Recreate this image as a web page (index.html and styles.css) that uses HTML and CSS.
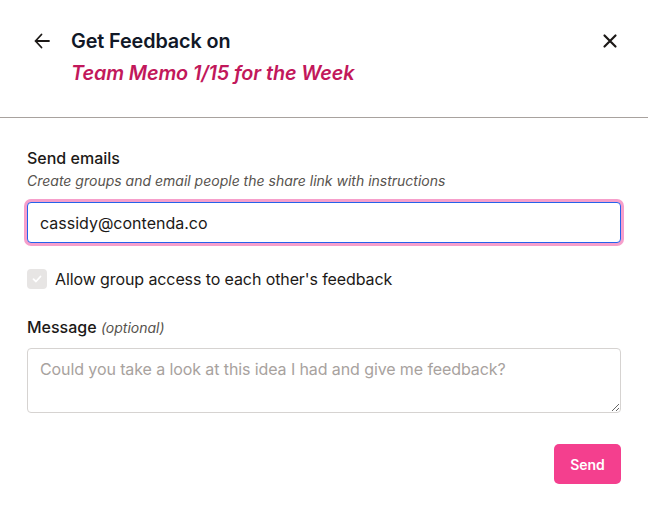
FILE: index.html
```html
<!DOCTYPE html>
<html lang="en">
<head>
<meta charset="utf-8">
<link rel="stylesheet" href="styles.css">
</head>
<body>
<div class="modal">
  <header class="head">
    <button class="icon-btn back" aria-label="Back">
      <svg width="20" height="20" viewBox="0 0 20 20" fill="none" stroke="#1c1917" stroke-width="1.8" stroke-linecap="round" stroke-linejoin="round"><path d="M17 10H3.5M9.5 3.5L3.5 10L9.5 16.5"/></svg>
    </button>
    <div class="titles">
      <div class="title">Get Feedback on</div>
      <div class="subtitle">Team Memo 1/15 for the Week</div>
    </div>
    <button class="icon-btn close" aria-label="Close">
      <svg width="16" height="16" viewBox="0 0 16 16" fill="none" stroke="#1c1917" stroke-width="2.2" stroke-linecap="round"><path d="M2.5 2.5L13.5 13.5M13.5 2.5L2.5 13.5"/></svg>
    </button>
  </header>
  <main class="body">
    <div class="field">
      <div class="label">Send emails</div>
      <div class="hint">Create groups and email people the share link with instructions</div>
      <input class="input" type="text" value="cassidy@contenda.co">
    </div>
    <label class="check-row">
      <span class="check"><svg width="12" height="12" viewBox="0 0 12 12" fill="none" stroke="#fff" stroke-width="1.8" stroke-linecap="round" stroke-linejoin="round"><path d="M2.5 6.2L5 8.5L9.5 3.5"/></svg></span>
      <span class="check-text">Allow group access to each other's feedback</span>
    </label>
    <div class="field msg">
      <div class="label">Message <span class="opt">(optional)</span></div>
      <textarea class="textarea" placeholder="Could you take a look at this idea I had and give me feedback?"></textarea>
    </div>
    <div class="actions">
      <button class="send">Send</button>
    </div>
  </main>
</div>
</body>
</html>
```

FILE: styles.css
```css
* { box-sizing: border-box; }
html, body { margin: 0; padding: 0; background: #fff; }
body { font-family: Inter, "Noto Sans", sans-serif; color: #1c1917; }
.modal { width: 648px; height: 507px; background: #fff; }
.head {
  display: flex;
  align-items: flex-start;
  height: 118px;
  padding: 29px 27px 0 31px;
  border-bottom: 1px solid #a8a29e;
}
.icon-btn {
  background: none; border: 0; padding: 0; margin: 0; cursor: pointer;
  display: flex; align-items: center; justify-content: center;
}
.back { width: 22px; height: 22px; margin-top: 1px; }
.titles { flex: 1; margin-left: 18px; }
.title { font-size: 19.8px; font-weight: 600; line-height: 24px; color: #111827; letter-spacing: -0.1px; }
.subtitle { font-size: 19.8px; font-weight: 600; font-style: italic; line-height: 24px; margin-top: 8px; color: #c2185b; letter-spacing: -0.1px; }
.close { width: 22px; height: 22px; margin-top: 1px; }
.body { padding: 30px 27px 0 27px; }
.label { font-size: 16px; font-weight: 500; line-height: 20px; color: #1c1917; }
.hint { font-size: 14px; font-style: italic; line-height: 18px; color: #57534e; margin-top: 4px; }
.input {
  display: block; width: 100%; height: 41px; margin-top: 12px;
  font-family: inherit; font-size: 16px; color: #1c1917;
  padding: 0 12px; border: 1px solid #2563eb; border-radius: 4px;
  box-shadow: 0 0 0 3px #f69fcb; outline: none; background: #fff;
}
.check-row { display: flex; align-items: center; margin-top: 26px; gap: 8px; }
.check {
  width: 20px; height: 20px; border-radius: 4px; background: #e7e5e4;
  display: flex; align-items: center; justify-content: center;
}
.check-text { font-size: 16px; line-height: 20px; color: #1c1917; letter-spacing: -0.1px; }
.msg { margin-top: 28px; }
.opt { font-size: 14px; font-style: italic; font-weight: 400; color: #57534e; }
.textarea {
  display: block; width: 100%; height: 65px; margin-top: 10px;
  font-family: inherit; font-size: 16px; line-height: 22px;
  padding: 9px 12px; border: 1px solid #d6d3d1; border-radius: 4px;
  resize: vertical; color: #1c1917; letter-spacing: -0.1px;
}
.textarea::placeholder { color: #a8a29e; }
.actions { display: flex; justify-content: flex-end; margin-top: 31px; }
.send {
  width: 67px; height: 40px; border: 0; border-radius: 5px;
  background: #f43f8e; color: #fff; font-family: inherit;
  font-size: 14px; font-weight: 600;
}
```
